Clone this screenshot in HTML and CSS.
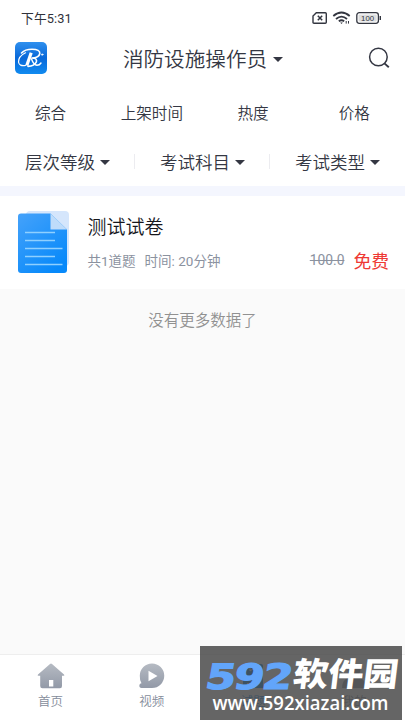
FILE: index.html
```
<!DOCTYPE html>
<html lang="zh-CN">
<head>
<meta charset="utf-8">
<title>消防设施操作员</title>
<link rel="stylesheet" href="styles.css">
</head>
<body>
<div class="app">
  <div class="status">
    <span class="clock">下午5:31</span>
    <svg class="status-icons" width="70" height="14" viewBox="0 0 70 14" fill="none" stroke="#333640">
      <path d="M4.3 1.7H13.3Q14.3 1.7 14.3 2.7V11.3Q14.3 12.3 13.3 12.3H2Q1 12.3 1 11.3V5Z" stroke-width="1.4"/>
      <path d="M5.8 4.8L10.2 9.2M10.2 4.8L5.8 9.2" stroke-width="1.5"/>
      <path d="M21.3 5Q29.5-2 37.7 5M24 8Q29.5 3.2 35 8M26.8 10.2Q29.5 8.3 32.2 10.2" stroke-width="1.8"/>
      <path d="M28.2 11.5H30.8L29.5 13Z" fill="#333640" stroke="none"/>
      <path d="M34.2 10V12.6M36.5 10V12.6" stroke-width="1"/>
      <rect x="44.8" y="1.7" width="21.6" height="10.6" rx="2.5" stroke-width="1.3"/>
      <path d="M68.3 5V9" stroke-width="1.4"/>
      <rect x="46.5" y="3.4" width="18.2" height="7.2" rx="1" fill="#dedede" stroke="none"/>
      <text class="battery" x="55.6" y="10" text-anchor="middle">100</text>
    </svg>
  </div>
  <header class="header">
    <svg class="logo" width="32" height="32" viewBox="0 0 32 32">
      <defs><linearGradient id="lg" x1="0" y1="0" x2="0" y2="1"><stop offset="0" stop-color="#2f90ee"/><stop offset=".5" stop-color="#0868d9"/><stop offset="1" stop-color="#108bf0"/></linearGradient></defs>
      <rect width="32" height="32" rx="5" fill="url(#lg)"/>
      <g fill="none" stroke="#fff" stroke-linecap="round">
        <path d="M6.500 11Q10 7.300 17 7.300Q25.300 7.300 24.800 11.500Q24 15.500 18 16" stroke-width="1.600"/>
        <path d="M10.500 10.800Q3.200 14.500 3.500 20Q4.200 24.500 10.500 23.500" stroke-width="1.200"/>
        <path d="M16.200 10.800L11.800 23.500" stroke-width="3.200" stroke-linecap="butt"/>
        <path d="M17 16Q22.500 16 21.300 20Q19.500 24 13 24.300" stroke-width="1.700"/>
        <path d="M16.500 17Q18.500 22.800 22 23.300Q24.500 23.200 26 21" stroke-width="1.400"/>
        <circle cx="27.200" cy="12.600" r=".7" stroke-width=".9"/>
      </g>
    </svg>
    <h1 class="title">消防设施操作员<i class="caret"></i></h1>
    <svg class="search" width="22" height="22" viewBox="0 0 22 22" fill="none" stroke="#343743" stroke-width="1.500"><circle cx="10.400" cy="10" r="8.800"/><path d="M16.400 16.400L20.800 20.200" stroke-width="1.900"/></svg>
  </header>
  <div class="sorts"><span>综合</span><span>上架时间</span><span>热度</span><span>价格</span></div>
  <div class="filters">
    <span>层次等级<i class="caret"></i></span><span>考试科目<i class="caret"></i></span><span>考试类型<i class="caret"></i></span>
  </div>
  <main class="content">
    <article class="paper">
      <svg class="doc" width="52" height="63" viewBox="0 0 52 63">
        <defs><linearGradient id="dg" x1="0" y1="0" x2=".7" y2="1"><stop stop-color="#45a2fa"/><stop offset="1" stop-color="#0789fa"/></linearGradient></defs>
        <path d="M12 0H47Q51 0 51 4V51Q51 55 47 55H12Q8 55 8 51V4Q8 0 12 0Z" fill="#d5e6fc"/>
        <path d="M3 2.500H32.500L49 18.500V59Q49 62 46 62H3Q0 62 0 59V5.500Q0 2.500 3 2.500Z" fill="url(#dg)"/>
        <path d="M32.500 2.500V18.500H49Z" fill="#bfdcfa"/>
        <path d="M7 21.500H37M7 29.500H37M7 37.500H44.500M7 45.500H37M7 53.500H44.500" stroke="#8fd0ff" stroke-width="1.500"/>
      </svg>
      <div class="info">
        <h2>测试试卷</h2>
        <div class="meta"><span>共1道题</span><span class="time">时间: 20分钟</span><del>100.0</del><strong>免费</strong></div>
      </div>
    </article>
    <p class="empty">没有更多数据了</p>
  </main>
  <nav class="nav">
    <a><svg width="28" height="26" viewBox="0 0 28 26"><defs><linearGradient id="ng" x1="0" y1="0" x2="0" y2="1"><stop stop-color="#b6bbc3"/><stop offset="1" stop-color="#9299a7"/></linearGradient></defs><path d="M13 1Q14 .2 15 1L27 11.500Q28 12.700 26.500 12.800H25V23Q25 25.300 23 25.300H5.500Q3.200 25.300 3.200 23V12.800H1.500Q0 12.700 1 11.500Z" fill="url(#ng)"/><path d="M12 17H16.300V23.500H12Z" fill="#fff"/></svg><span>首页</span></a>
    <a><svg width="28" height="26" viewBox="0 0 28 26"><path d="M14 .5A12.200 12.200 0 1 1 14 25H3.500C.5 25 .8 20.500 3.500 20.300Q1.600 17 1.800 12.800A12.200 12.200 0 0 1 14 .5Z" fill="url(#ng)"/><path d="M10.500 7.800L19.500 13L10.500 18.300Z" fill="#fff"/></svg><span>视频</span></a>
    <a class="active"><svg width="28" height="26" viewBox="0 0 28 26"><path d="M6 1H22Q24 1 24 3V25H7Q4 25 4 22V3Q4 1 6 1Z" fill="#168ced"/><path d="M8 20.500H21M11 1V8L14 6L17 8V1" stroke="#fff" fill="none"/></svg><span>试题</span></a>
    <a><svg width="28" height="26" viewBox="0 0 28 26"><circle cx="14" cy="7" r="6.500" fill="#9aa1ae"/><path d="M2 25Q2 14 14 14T26 25Z" fill="#9aa1ae"/></svg><span>我的</span></a>
  </nav>
  <div class="watermark">
    <svg width="202" height="74" viewBox="0 0 202 74">
      <g transform="translate(4 42.500) skewX(-10)"><text class="digits" x="0" y="0" textLength="85" lengthAdjust="spacingAndGlyphs">592</text></g>
      <g transform="translate(92 40) skewX(-7)"><text class="brand" x="0" y="0" textLength="105" lengthAdjust="spacingAndGlyphs">软件园</text></g>
      <text class="site" x="12.500" y="64" textLength="176" lengthAdjust="spacingAndGlyphs">www.592xiazai.com</text>
    </svg>
  </div>
</div>
</body>
</html>
```
FILE: styles.css
```
* { box-sizing: border-box; }
body { margin: 0; font-family: Roboto, "Noto Sans CJK SC", sans-serif; font-weight: 350; color: #343743; }
h1, h2, p { margin: 0; font-weight: 350; }
.app { position: relative; width: 405px; height: 720px; display: flex; flex-direction: column; background: #fff; overflow: hidden; }
.status { height: 36px; padding: 0 23px 2px 21px; display: flex; align-items: center; justify-content: space-between; }
.status-icons { margin-top: 2px; }
.clock { font-size: 12.8px; font-weight: 400; letter-spacing: .1px; color: #30323a; }
.battery { font: 400 7.8px "Liberation Sans", sans-serif; fill: #333640; stroke: none; }
.header { height: 44px; padding: 0 15px; display: flex; align-items: center; justify-content: space-between; }
.logo { margin-top: -1px; }
.title { display: flex; align-items: center; font-size: 20.6px; line-height: 30px; margin: 3px 9px 0 0; }
.caret { width: 0; height: 0; border: 5px solid transparent; border-top-color: #343743; border-bottom: 0; margin-left: 6px; }
.title .caret { margin-top: -1px; }
.sorts { height: 64px; padding-bottom: 1px; display: grid; grid-template-columns: repeat(4, 1fr); align-items: center; text-align: center; font-size: 15.6px; }
.filters { height: 42px; padding-bottom: 8px; display: grid; grid-template-columns: repeat(3, 1fr); font-size: 17.5px; }
.filters span { display: flex; align-items: center; justify-content: center; background: linear-gradient(#ececf0, #ececf0) right center / 1px 15px no-repeat; }
.filters span:last-child { background: none; }
.filters .caret { margin-left: 5px; margin-top: 2px; }
.content { flex: 1; background: #fafafa; border-top: 10px solid #f4f6fe; }
.paper { height: 93px; background: #fff; padding: 15px 16px 0 18px; display: flex; gap: 17.5px; }
.doc { flex: none; }
.info { flex: 1; }
.info h2 { color: #16171c; font-size: 19px; line-height: 28px; margin-top: 3px; }
.meta { display: flex; align-items: center; height: 30px; margin-top: 3px; color: #8b929f; font-size: 13.5px; font-weight: 400; }
.time { margin-left: 9px; }
.meta del { margin-left: auto; font-size: 13.8px; }
.meta strong { margin-left: 9px; color: #ee3934; font-size: 17.8px; font-weight: 400; }
.empty { text-align: center; color: #919191; font-size: 15.5px; line-height: 24px; padding-top: 20px; }
.nav { height: 66px; border-top: 1px solid #eee; display: grid; grid-template-columns: repeat(4, 1fr); }
.nav a { display: flex; flex-direction: column; align-items: center; padding-top: 8px; font-size: 12.5px; line-height: 18px; color: #858d9b; }
.nav span { margin-top: 4px; }
.nav .active { color: #168ced; }
.watermark { position: absolute; left: 200px; top: 646px; width: 202px; height: 74px; background: rgba(70, 70, 70, .83); }
.watermark svg { display: block; }
.digits { font: 700 35px "DejaVu Sans", sans-serif; letter-spacing: -1.5px; fill: #62a5fa; stroke: #62a5fa; stroke-width: 1.2px; }
.brand { font: 900 33px "Noto Sans CJK SC", sans-serif; fill: #fff; }
.site { font: 600 20px "Open Sans", sans-serif; fill: #fff; }
```
